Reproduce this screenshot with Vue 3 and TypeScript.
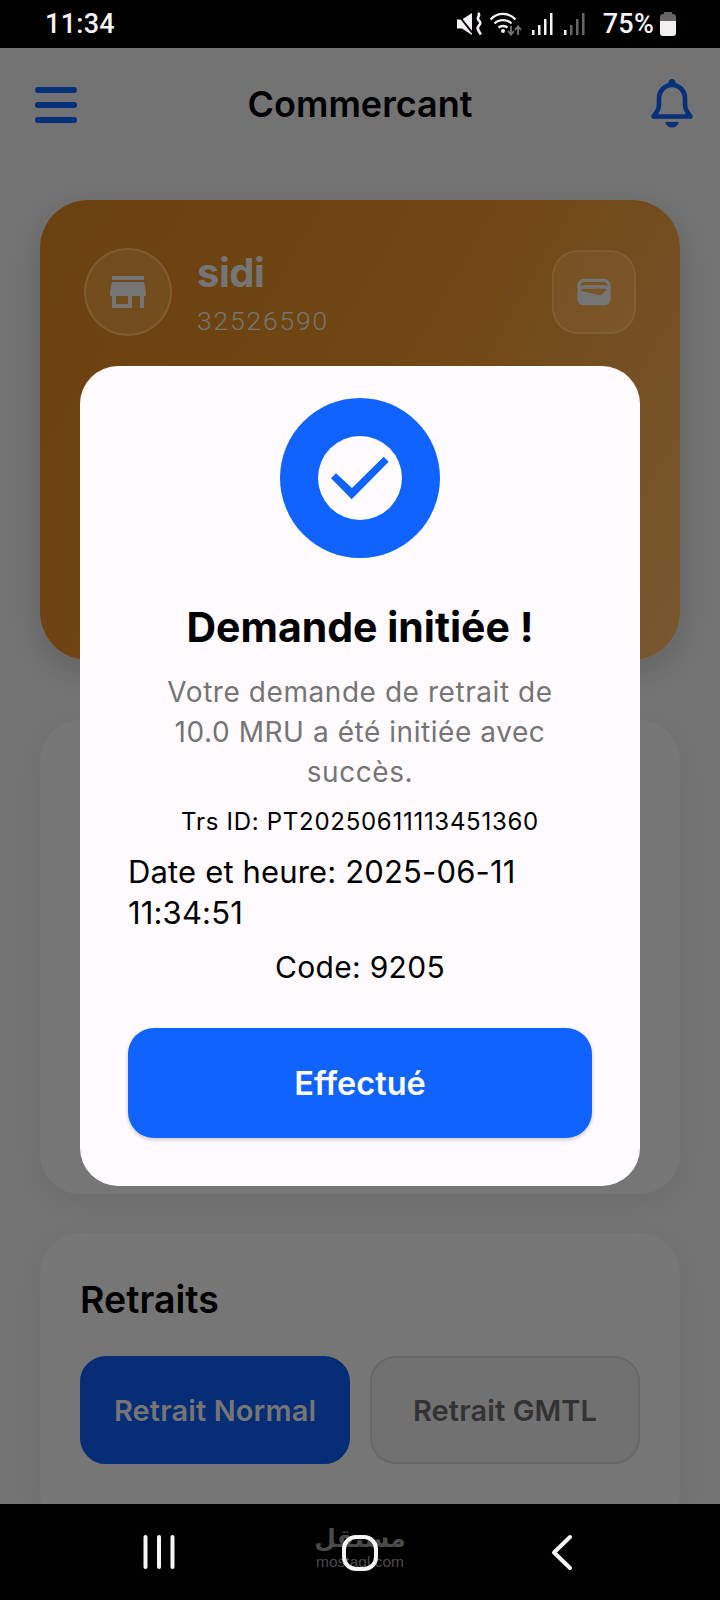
<script setup lang="ts">
const signalBars: number[] = [5, 10, 16, 22]
</script>

<template>
  <div class="phone">
    <div class="status">
      <span class="time">11:34</span>
      <div class="status-right">
        <svg class="status-icons" width="132" height="48" viewBox="456 0 132 48">
          <path d="M458 19.500h5L473 13v22l-10-6.500h-5z" fill="#f4f0f4" />
          <path d="M458 13.500l16 20" stroke="#000" stroke-width="2" />
          <path d="M479 13c3.500 2.500-2 4 .500 7 2.500 2.500 2.500 3.500 0 6-2 2.500 0 5 2.500 8.500" fill="none" stroke="#f4f0f4" stroke-width="2.600" />
          <g fill="none" stroke="#f4f0f4" stroke-width="2.300">
            <path d="M491.500 19.500c7-7.500 18-7.500 25 0" />
            <path d="M495.500 23.500c4.500-4.500 12.500-4.500 17 0" />
            <path d="M499.500 27.500c2.500-2 6.500-2 9 0" />
          </g>
          <circle cx="504" cy="31" r="2" fill="#f4f0f4" />
          <path d="M512 26v8m-3-3l3 3.500 3-3.500" fill="none" stroke="#777" stroke-width="1.800" />
          <path d="M519 35v-8m-3 3l3-3.500 3 3.500" fill="none" stroke="#777" stroke-width="1.800" />
          <rect v-for="(h, i) in signalBars" :key="'a' + i" :x="533 + i * 6" :y="35 - h" width="2.500" :height="h" fill="#f4f0f4" />
          <rect v-for="(h, i) in signalBars" :key="'b' + i" :x="565 + i * 6" :y="35 - h" width="2.500" :height="h" :fill="i === 0 ? '#f4f0f4' : '#666'" />
        </svg>
        <span class="percent">75%</span>
        <span class="battery"><span class="battery-cap"></span><span class="battery-used"></span><span class="battery-fill"></span></span>
      </div>
    </div>

    <div class="screen">
      <header class="topbar">
        <svg class="menu" width="42" height="36" viewBox="0 0 42 36">
          <rect y="0" width="42" height="6" rx="3" />
          <rect y="15" width="42" height="6" rx="3" />
          <rect y="30" width="42" height="6" rx="3" />
        </svg>
        <h1 class="title">Commercant</h1>
        <svg class="bell" width="50" height="56" viewBox="7 6 50 56">
          <circle cx="32" cy="12.500" r="3.500" fill="#07307a" />
          <path d="M13.500 46.500c3-3.500 5.500-7 5.500-12v-6c0-8 6-13.500 13-13.500s13 5.500 13 13.500v6c0 5 2.500 8.500 5.500 12z" fill="none" stroke="#07307a" stroke-width="4.600" stroke-linejoin="round" />
          <path d="M25.500 52h13a6.500 5.500 0 0 1-13 0z" fill="#07307a" />
        </svg>
      </header>

      <section class="merchant">
        <div class="merchant-row">
          <div class="avatar">
            <svg width="48" height="48" viewBox="0 0 24 24" fill="#757575"><path d="M20 4H4v2h16V4zm1 10v-2l-1-5H4l-1 5v2h1v6h10v-6h4v6h2v-6h1zm-9 4H6v-4h6v4z" /></svg>
          </div>
          <div class="identity">
            <div class="name">sidi</div>
            <div class="phone-number">32526590</div>
          </div>
          <div class="wallet">
            <svg width="40" height="40" viewBox="0 0 24 24" fill="#757575"><path d="M18 4H6C3.790 4 2 5.790 2 8v8c0 2.210 1.790 4 4 4h12c2.210 0 4-1.790 4-4V8c0-2.210-1.790-4-4-4zm-1.860 9.770c-.24.2-.57.28-.88.2L4.150 11.250C4.450 10.520 5.160 10 6 10h12c.67 0 1.260.34 1.630.84l-3.490 2.930zM6 6h12c1.100 0 2 .9 2 2v.55c-.59-.34-1.270-.55-2-.55H6c-.73 0-1.410.21-2 .55V8c0-1.100.9-2 2-2z" /></svg>
          </div>
        </div>
      </section>

      <section class="panel panel-hidden"></section>

      <section class="panel">
        <h2 class="panel-title">Retraits</h2>
        <div class="choices">
          <button class="choice choice-active">Retrait Normal</button>
          <button class="choice">Retrait GMTL</button>
        </div>
      </section>
    </div>

    <div class="dialog">
      <div class="badge">
        <div class="badge-core">
          <svg width="58" height="44" viewBox="331 455 58 44"><path d="M331 477.300l5-5 16 14.700 31.700-31.300 5 5-37 37.600z" fill="#1063fe" /></svg>
        </div>
      </div>
      <h3 class="dialog-title">Demande initiée !</h3>
      <p class="message">Votre demande de retrait de 10.0 MRU a été initiée avec succès.</p>
      <p class="trs">Trs ID: PT20250611113451360</p>
      <p class="date">Date et heure: 2025-06-11 11:34:51</p>
      <p class="code">Code: 9205</p>
      <button class="done">Effectué</button>
    </div>

    <nav class="nav">
      <div class="watermark">
        <span class="wm-ar">مستقل</span>
        <span class="wm-en">mostaql.com</span>
      </div>
      <svg class="nav-icons" width="720" height="96" viewBox="0 0 720 96">
        <g stroke="#f6f6f6" stroke-width="4" stroke-linecap="round" fill="none">
          <path d="M145.500 33v30M159 33v30M172.500 33v30" />
          <rect x="344" y="33" width="32" height="32" rx="12" />
          <path d="M570 33L554 48.500 570 64" stroke-linejoin="round" />
        </g>
      </svg>
    </nav>
  </div>
</template>

<style>
html, body { margin: 0; background: #000; }
</style>

<style scoped>
* { box-sizing: border-box; }
.phone {
  position: relative;
  width: 720px;
  height: 1600px;
  display: flex;
  flex-direction: column;
  overflow: hidden;
  font-family: Inter, "Liberation Sans", sans-serif;
  background: #737373;
}
.status {
  height: 48px;
  flex: none;
  background: #000;
  display: flex;
  align-items: center;
  justify-content: space-between;
  padding: 0 44px 0 45px;
  color: #f6f2f6;
  font-family: Roboto, sans-serif;
  font-weight: 500;
}
.time { font-size: 27px; letter-spacing: 0.3px; }
.status-right { display: flex; align-items: center; }
.status-icons { display: block; }
.percent { font-size: 27px; margin-left: 16px; letter-spacing: 0.2px; }
.battery {
  position: relative;
  width: 16px;
  height: 24px;
  margin-left: 6px;
  display: flex;
  flex-direction: column;
  align-items: center;
}
.battery-cap { width: 8px; height: 2px; background: #666; flex: none; }
.battery-used { width: 16px; height: 7px; background: #666; border-radius: 3px 3px 0 0; flex: none; }
.battery-fill { width: 16px; flex: 1; background: #f2eef2; border-radius: 0 0 3px 3px; }

.screen {
  flex: 1;
  min-height: 0;
  overflow: hidden;
  padding: 0 40px;
  background: #737373;
}
.topbar {
  height: 112px;
  margin: 0 -17px;
  display: grid;
  grid-template-columns: 1fr auto 1fr;
  align-items: center;
}
.menu { fill: #07307a; margin-left: 12px; margin-top: 2px; justify-self: start; }
.title {
  margin: 0;
  font-size: 36px;
  font-weight: 600;
  color: #000;
}
.bell { justify-self: end; }

.merchant {
  height: 460px;
  margin-top: 40px;
  padding: 48px 44px 0;
  border-radius: 48px;
  background: linear-gradient(120deg, #6a4210 0%, #704612 48%, #785830 100%);
  box-shadow: 0 10px 28px rgba(0, 0, 0, 0.14);
}
.merchant-row { display: flex; align-items: flex-start; }
.avatar {
  width: 88px;
  height: 88px;
  border-radius: 50%;
  flex: none;
  display: flex;
  align-items: center;
  justify-content: center;
  background: rgba(255, 255, 255, 0.05);
  border: 2px solid rgba(255, 255, 255, 0.09);
}
.identity { margin-left: 25px; flex: 1; }
.name {
  font-size: 40px;
  line-height: 50px;
  font-weight: 700;
  color: #757575;
  letter-spacing: -0.5px;
}
.phone-number {
  margin-top: 7px;
  font-size: 26.500px;
  line-height: 32px;
  font-weight: 300;
  letter-spacing: 1.800px;
  color: #757575;
  font-family: Roboto, sans-serif;
}
.wallet {
  width: 84px;
  height: 84px;
  margin-top: 2px;
  border-radius: 26px;
  display: flex;
  align-items: center;
  justify-content: center;
  background: rgba(255, 255, 255, 0.045);
  border: 2px solid rgba(255, 255, 255, 0.06);
}

.panel {
  margin-top: 39px;
  padding: 44px 40px 40px;
  border-radius: 40px;
  background: #767676;
  box-shadow: 0 8px 24px rgba(0, 0, 0, 0.05);
  min-height: 300px;
}
.panel-hidden {
  height: 474px;
  margin-top: 60px;
}
.panel-title {
  margin: 0;
  font-size: 37.500px;
  line-height: 46px;
  font-weight: 600;
  color: #000;
}
.choices {
  display: grid;
  grid-template-columns: 270px 270px;
  gap: 20px;
  margin-top: 33px;
}
.choice {
  height: 108px;
  padding: 0;
  border-radius: 26px;
  font-family: inherit;
  font-size: 29px;
  font-weight: 600;
  letter-spacing: 0.1px;
  background: #717171;
  border: 2px solid #686868;
  color: #333;
}
.choice-active {
  background: #062d75;
  border-color: #062d75;
  color: #757575;
}

.dialog {
  position: absolute;
  left: 80px;
  top: 366px;
  width: 560px;
  height: 820px;
  padding: 32px 48px 48px;
  border-radius: 38px;
  background: #fffbff;
  display: flex;
  flex-direction: column;
  align-items: center;
  color: #000;
}
.badge {
  width: 160px;
  height: 160px;
  flex: none;
  border-radius: 50%;
  background: #1063fe;
  display: flex;
  align-items: center;
  justify-content: center;
}
.badge-core {
  width: 84px;
  height: 84px;
  border-radius: 50%;
  background: #fffbff;
  display: flex;
  align-items: center;
  justify-content: center;
}
.dialog-title {
  margin: 47px 0 0;
  font-size: 41px;
  line-height: 44px;
  font-weight: 700;
}
.message {
  margin: 23px 0 0;
  width: 420px;
  text-align: center;
  font-size: 28px;
  line-height: 40px;
  color: #757575;
  letter-spacing: 0.56px;
}
.trs {
  margin: 15px 0 0;
  font-size: 24px;
  line-height: 30px;
  letter-spacing: 0.72px;
  white-space: nowrap;
}
.date {
  margin: 14px 0 0;
  align-self: stretch;
  font-size: 31px;
  line-height: 41px;
  letter-spacing: 0.15px;
}
.code {
  margin: 14px 0 0;
  font-size: 30px;
  line-height: 40px;
  letter-spacing: 0.3px;
}
.done {
  margin-top: 41px;
  width: 464px;
  height: 110px;
  flex: none;
  border: 0;
  border-radius: 26px;
  background: #1063fe;
  color: #fff;
  font-family: inherit;
  font-size: 32.500px;
  font-weight: 600;
  box-shadow: 0 2px 4px rgba(0, 0, 0, 0.2);
}

.nav {
  position: relative;
  height: 96px;
  flex: none;
  background: #000;
}
.nav-icons { position: absolute; left: 0; top: 0; display: block; }
.watermark {
  position: absolute;
  left: 300px;
  width: 120px;
  top: 20px;
  display: flex;
  flex-direction: column;
  align-items: center;
  color: #4a4a4a;
}
.wm-ar {
  font-family: "DejaVu Sans", sans-serif;
  font-size: 25px;
  font-weight: 700;
  line-height: 30px;
}
.wm-en {
  font-family: "Liberation Sans", sans-serif;
  font-size: 15.500px;
  line-height: 16px;
}
</style>
